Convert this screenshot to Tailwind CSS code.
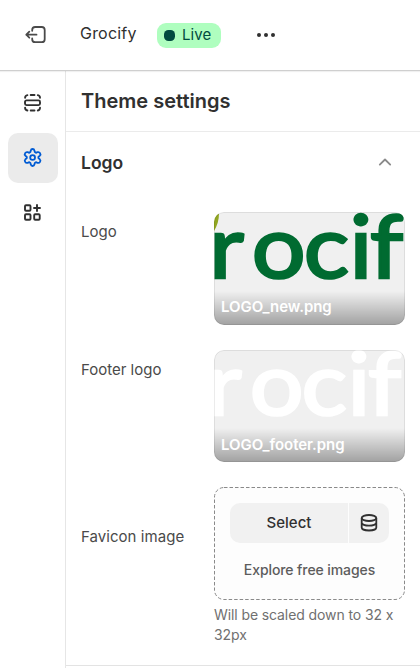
<!DOCTYPE html>
<html lang="en">
<head>
<meta charset="utf-8">
<title>Theme settings</title>
<script src="https://cdn.jsdelivr.net/npm/@tailwindcss/browser@4"></script>
</head>
<body class="w-[420px] h-[668px] overflow-hidden bg-white font-['Inter',sans-serif] [font-feature-settings:'calt'_0] text-[#303030] flex flex-col">
<header class="h-[71px] shrink-0 border-b border-[#cfcfcf] shadow-[0_1px_1px_rgba(0,0,0,0.06)] flex items-center relative">
  <button class="ml-[25px] size-[21px] shrink-0" aria-label="Exit">
    <svg class="size-[21px]" viewBox="0 0 21 21" fill="none" stroke="#4a4a4a" stroke-width="1.8" stroke-linecap="round" stroke-linejoin="round"><path d="M7.200 5.800V5a3 3 0 0 1 3-3H16.700a3 3 0 0 1 3 3V14.200a3 3 0 0 1-3 3H10.200a3 3 0 0 1-3-3V13.500M11.500 9.700H1.300M4.300 6.700L1.300 9.700L4.300 12.700"/></svg>
  </button>
  <span class="ml-[34px] w-[57px] text-[16px] tracking-[0.2px] leading-5 -mt-[4px]">Grocify</span>
  <span class="ml-5 h-[25px] w-16 rounded-[9px] bg-[#affebf] text-[#014b40] flex items-center pl-[7px] text-[15px]"><span class="size-[11px] rounded-[4.5px] bg-[#014b40] mr-[7px]"></span><span class="tracking-[0.1px] translate-y-[-0.4px]">Live</span></span>
  <button class="ml-9 w-[18px] flex justify-between" aria-label="More"><i class="size-1 rounded-full bg-[#303030]"></i><i class="size-1 rounded-full bg-[#303030]"></i><i class="size-1 rounded-full bg-[#303030]"></i></button>
</header>
<div class="flex flex-1 min-h-0">
  <nav class="w-[66px] shrink-0 border-r border-[#e6e6e6] pt-[7px] pl-2 flex flex-col gap-[5px]">
    <button class="size-[50px] flex items-center justify-center" aria-label="Sections">
      <svg class="size-5" viewBox="0 0 20 20" fill="none" stroke="#303030" stroke-width="1.900" stroke-linecap="round"><rect x="2" y="7.400" width="15" height="4.700" rx="1.500"/><path d="M2.100 4.800a2.800 2.800 0 0 1 2.300-2.700M7.700 2h3.800M14.800 2.100a2.800 2.800 0 0 1 2.200 2.700M2.100 14.800a2.800 2.800 0 0 0 2.300 2.700M7.700 17.500h3.800M14.800 17.500a2.800 2.800 0 0 0 2.200-2.700"/></svg>
    </button>
    <button class="size-[50px] rounded-[10px] bg-[#ebebeb] flex items-center justify-center" aria-label="Theme settings">
      <svg class="size-5" viewBox="0 0 20 20" fill="none" stroke="#005bd3" stroke-width="1.800" stroke-linejoin="round"><path d="M7.700 2.700Q8.100 1 9.600 1Q11.100 1 11.500 2.700L11.800 4.100L12.900 4.800L14.500 4.200Q16.200 3.700 17 5.100Q18 6.600 16.800 7.700L15.400 8.900V10.100L16.800 11.300Q18 12.400 17 13.900Q16.200 15.300 14.500 14.800L12.900 14.200L11.800 14.900L11.500 16.300Q11.100 18 9.600 18Q8.100 18 7.700 16.300L7.400 14.900L6.300 14.200L4.700 14.800Q3 15.300 2.200 13.900Q1.200 12.400 2.400 11.300L3.800 10.100V8.900L2.400 7.700Q1.200 6.600 2.200 5.100Q3 3.700 4.700 4.200L6.300 4.800L7.400 4.100Z"/><circle cx="9.600" cy="9.500" r="2.400"/></svg>
    </button>
    <button class="size-[50px] flex items-center justify-center" aria-label="Apps">
      <svg class="size-5" viewBox="0 0 20 20" fill="none" stroke="#303030" stroke-width="1.900" stroke-linecap="round"><rect x="2" y="2.200" width="5.500" height="5.500" rx="1"/><rect x="2" y="11.200" width="5.500" height="5.500" rx="1"/><rect x="11.200" y="11.200" width="5.500" height="5.500" rx="1"/><path d="M14 2v6M11 5h6"/></svg>
    </button>
  </nav>
  <main class="flex-1 min-w-0">
    <div class="h-[61px] border-b border-[#ebebeb] px-[15px] flex items-center"><h1 class="text-[20px] font-semibold leading-7">Theme settings</h1></div>
    <section class="h-[534px] border-b border-[#e3e3e3] px-[15px]">
      <div class="h-[62px] flex items-center justify-between"><h2 class="text-[17.500px] font-semibold">Logo</h2>
        <svg class="w-[14px] h-2 mr-[13px] -mt-[3px]" viewBox="0 0 14 8" fill="none" stroke="#8a8a8a" stroke-width="1.800" stroke-linecap="round" stroke-linejoin="round"><path d="M1.800 6.600L7 1.500L12.200 6.600"/></svg>
      </div>
      <div class="grid grid-cols-[133px_191px] pt-[18px] text-[15px] leading-5 text-[#4a4a4a]">
        <span class="pt-[10px]">Logo</span>
        <div class="relative h-[113px] rounded-[10px] overflow-hidden bg-[#f0f0f0]">
          <svg class="block" width="191" height="113" viewBox="0 0 191 113" font-family="Lato, sans-serif" font-weight="400" font-size="88" fill="#006b31" stroke="#006b31" stroke-width="2.600"><path d="M0 4L5 1Q5 11 0 19Z" fill="#91a621" stroke="none"/><text y="66" x="-4.500 35 83 125.500 144.500" transform="scale(1.08 1)">rocif</text></svg>
          <div class="absolute inset-x-0 bottom-0 h-[34px] bg-gradient-to-b from-transparent to-black/33"></div>
          <span class="absolute left-[7px] bottom-2 font-semibold tracking-[-0.05px] text-white">LOGO_new.png</span>
          <div class="absolute inset-0 rounded-[10px] border border-black/8"></div>
        </div>
        <span class="pt-[35px]">Footer logo</span>
        <div class="relative mt-[25px] h-[112px] rounded-[10px] overflow-hidden bg-[#f0f0f0]">
          <svg class="block" width="191" height="112" viewBox="0 0 191 112" font-family="Lato, sans-serif" font-weight="400" font-size="88" fill="#fff" stroke="#fff" stroke-width="2.600"><text y="65" x="-6.500 33 81 123.500 142.500" transform="scale(1.08 1)">rocif</text></svg>
          <div class="absolute inset-x-0 bottom-0 h-[34px] bg-gradient-to-b from-transparent to-black/33"></div>
          <span class="absolute left-[7px] bottom-[7px] font-semibold tracking-[-0.05px] text-white">LOGO_footer.png</span>
          <div class="absolute inset-0 rounded-[10px] border border-black/8"></div>
        </div>
        <span class="pt-[65px] tracking-[0.05px]">Favicon image</span>
        <div class="pt-[25px]">
          <div class="relative h-[113px] bg-[#fdfdfd] rounded-[10px] px-4 pt-4">
            <svg class="absolute inset-0" width="191" height="113" fill="none"><rect x=".5" y=".5" width="190" height="112" rx="9.500" stroke="#8a8a8a" stroke-dasharray="3.500 2"/></svg>
            <div class="flex h-10 gap-px font-medium text-[#303030]"><button class="w-[118px] rounded-l-[10px] bg-[#f1f1f1]">Select</button><button class="w-10 rounded-r-[10px] bg-[#f1f1f1] flex items-center justify-center" aria-label="Data source"><svg class="size-5" viewBox="0 0 20 20" fill="none" stroke="#303030" stroke-width="1.800"><ellipse cx="10" cy="5" rx="7.300" ry="3"/><path d="M2.700 5V14.500C2.700 16.200 6 17.500 10 17.500S17.300 16.200 17.300 14.500V5M2.700 9.800C2.700 11.400 6 12.700 10 12.700S17.300 11.400 17.300 9.800"/></svg></button></div>
            <div class="mt-[17px] text-center text-[14px] tracking-[-0.09px] font-medium text-[#5c5c5c]">Explore free images</div>
          </div>
          <p class="mt-[5px] text-[14px] tracking-[-0.1px] leading-5 text-[#707070]">Will be scaled down to 32 x 32px</p>
        </div>
      </div>
    </section>
  </main>
</div>
</body>
</html>
